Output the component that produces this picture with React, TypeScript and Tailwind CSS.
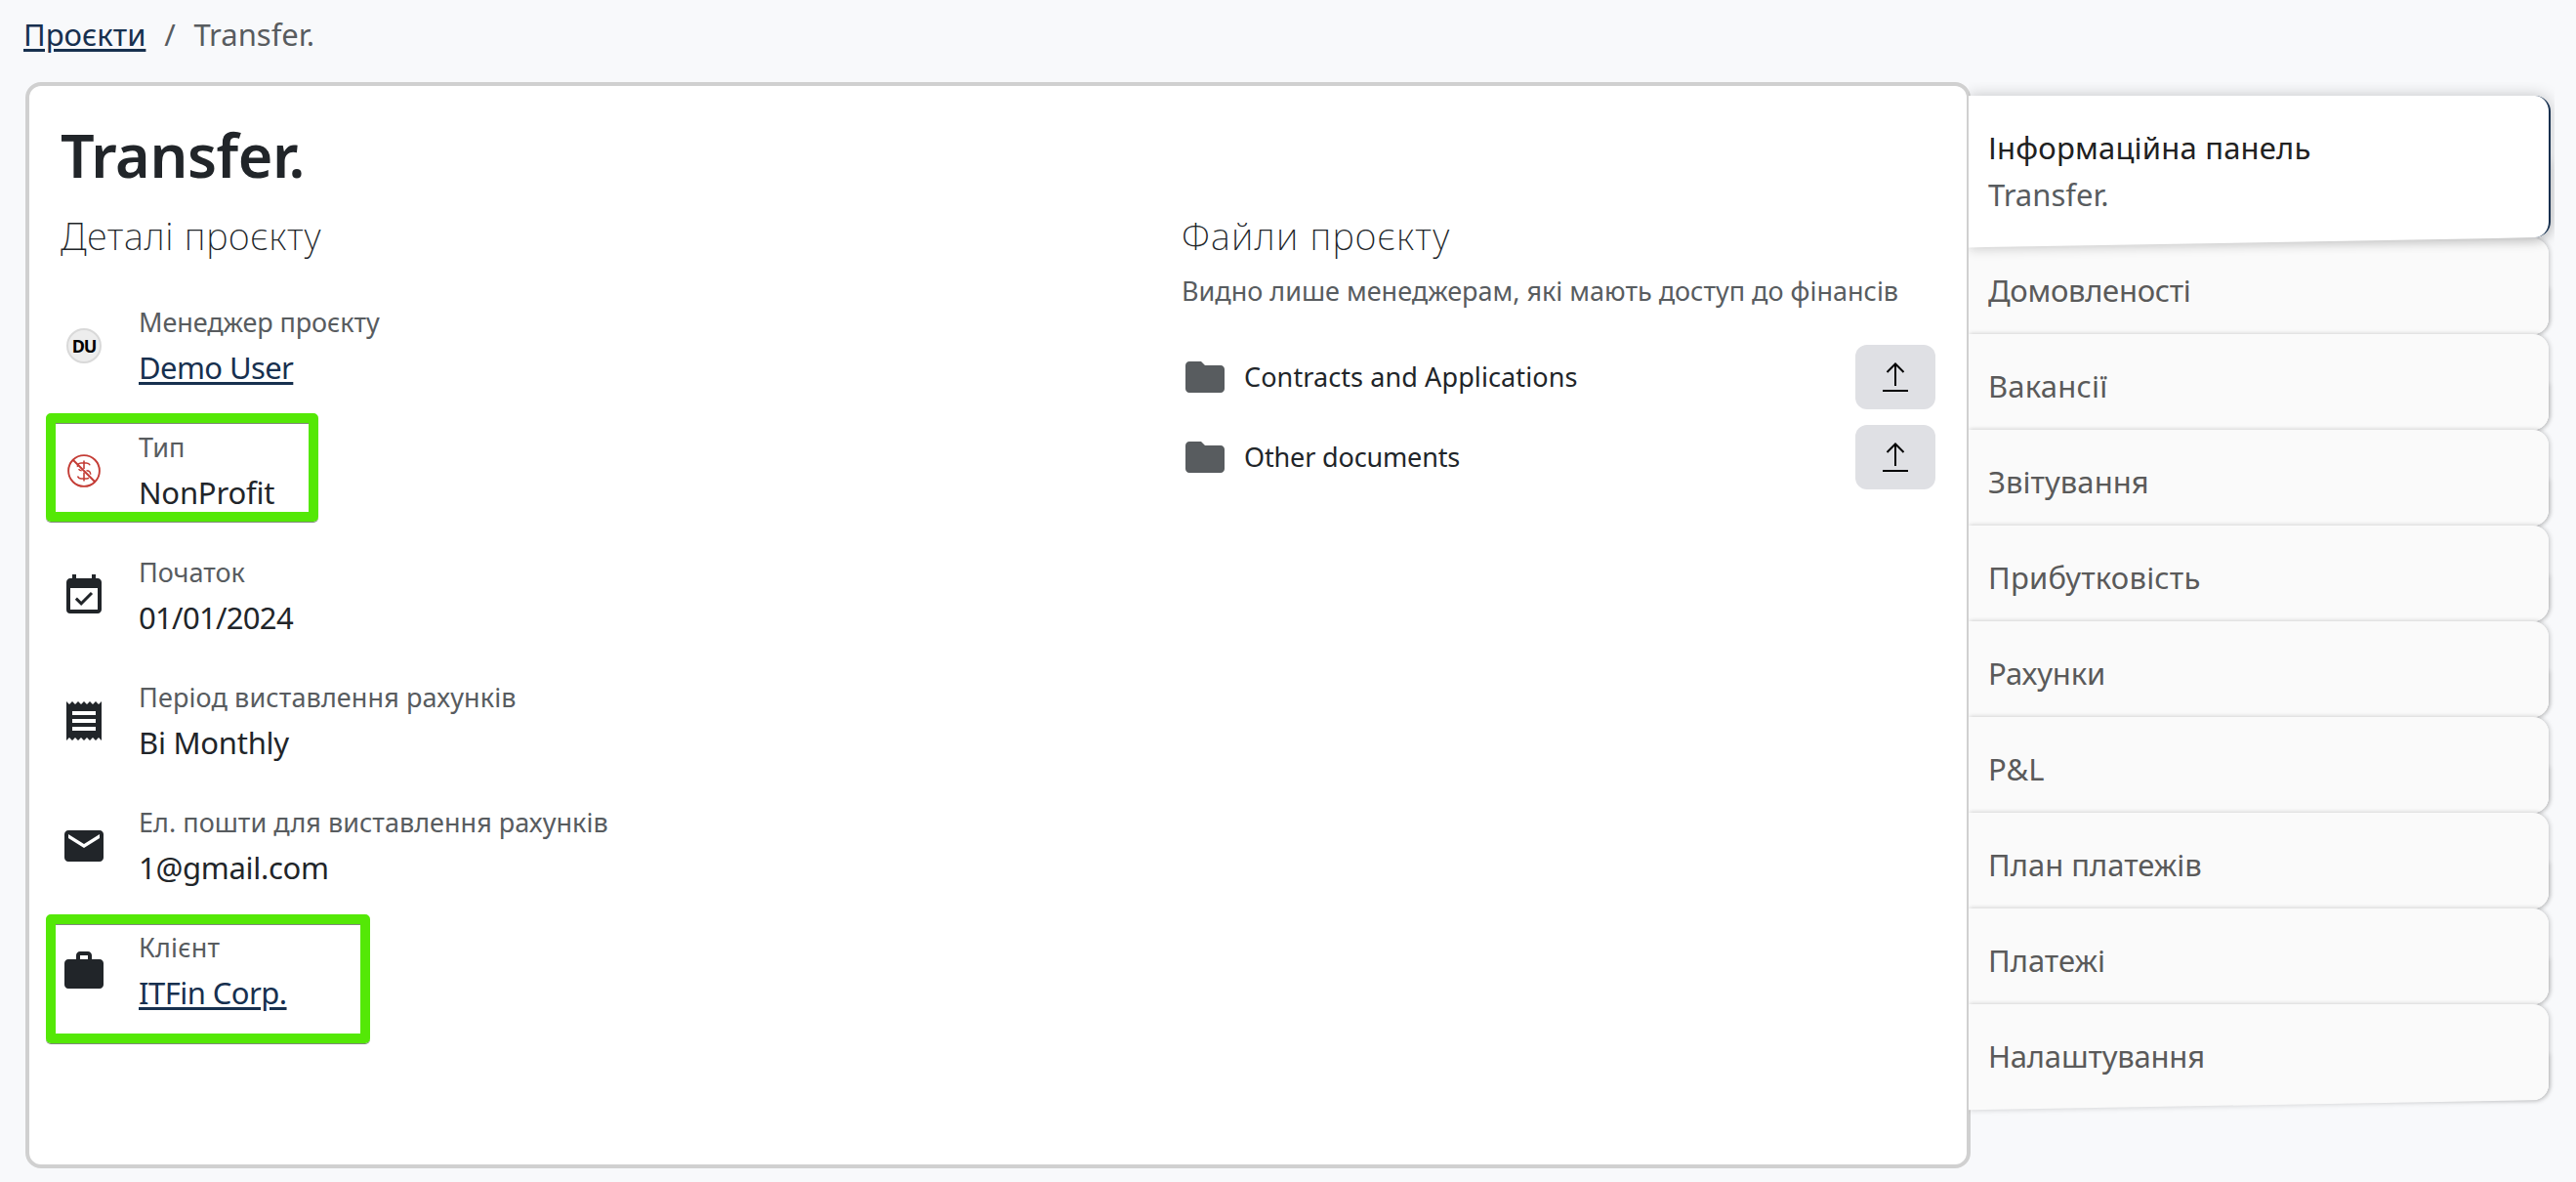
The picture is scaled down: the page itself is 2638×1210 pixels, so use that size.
import React from "react";
import { MdEmail, MdEventAvailable, MdFolder, MdReceipt, MdWork } from "react-icons/md";

const NonProfitIcon = () => (
  <svg viewBox="0 0 48 48" className="size-12" fill="none" stroke="#c43c35" strokeWidth="1.9">
    <circle cx="24" cy="24" r="15.9" />
    <path d="M13 13L35 35" />
    <path d="M24 13.5V22M24 25.5V34.5" strokeWidth="1.6" />
    <path d="M17.5 20c-.5-2 .8-4 3.500-4h5.500c1.800 0 3 .8 3.700 2.300M17.500 29.500c.7 1.700 2 2.500 3.700 2.500h5.500c1 0 1.700-.3 2.300-.8M18.500 22.300c.8 1 2 1.500 3.200 1.500M26.500 23.800c2.500 0 4.200 1.600 4.200 4" strokeWidth="1.5" />
  </svg>
);

const UploadIcon = () => (
  <svg viewBox="0 0 26 30" className="w-[26px] h-[30px]" fill="none" stroke="#000" strokeWidth="2">
    <path d="M13 24V1.500" />
    <path d="M4.500 10L13 1.500L21.500 10" />
    <path d="M0 29H26" />
  </svg>
);

const Avatar = () => (
  <div className="size-9 mx-1.5 rounded-full border-2 border-[#d9d9d9] bg-[#ededed] flex items-center justify-center text-[18px] font-bold text-black tracking-[-1.2px]">
    DU
  </div>
);

const details = [
  { label: "Менеджер проєкту", value: "Demo User", icon: <Avatar />, link: true, labelClass: "tracking-[-0.08px]", valueClass: "tracking-[-0.6px]" },
  { label: "Тип", value: "NonProfit", icon: <NonProfitIcon />, valueClass: "tracking-[-0.2px]", mark: "w-[279px] h-[111px] -top-[15px]" },
  { label: "Початок", value: "01/01/2024", icon: <MdEventAvailable className="size-12" />, valueClass: "tracking-[-0.7px]" },
  { label: "Період виставлення рахунків", value: "Bi Monthly", icon: <MdReceipt className="size-12" />, labelClass: "tracking-[0.12px]", valueClass: "tracking-[-0.25px]" },
  { label: "Ел. пошти для виставлення рахунків", value: "1@gmail.com", icon: <MdEmail className="size-12" />, labelClass: "tracking-[0.03px]", valueClass: "tracking-[-0.3px]" },
  { label: "Клієнт", value: "ITFin Corp.", icon: <MdWork className="size-12" />, link: true, labelClass: "tracking-[0.2px]", valueClass: "tracking-[-0.55px]", mark: "w-[332px] h-[132px] -top-[14px]" },
];

const files = [
  { name: "Contracts and Applications", className: "tracking-[0.1px]" },
  { name: "Other documents", className: "tracking-[-0.15px]" },
];

const tabs = [
  { name: "Домовленості", className: "tracking-[-0.3px]" },
  { name: "Вакансії", className: "tracking-[0.2px]" },
  { name: "Звітування", className: "tracking-[0.05px]" },
  { name: "Прибутковість", className: "tracking-[0.2px]" },
  { name: "Рахунки", className: "tracking-[-0.1px]" },
  { name: "P&L", className: "" },
  { name: "План платежів", className: "" },
  { name: "Платежі", className: "" },
  { name: "Налаштування", className: "tracking-[-0.2px]" },
];

const linkClass = "text-[#17304f] underline decoration-[2.5px] underline-offset-[3px]";

const App = () => {
  return (
    <div className="w-[2638px] h-[1210px] overflow-hidden bg-[#f8f9fb] text-[#212529] font-['Noto_Sans',sans-serif] flex flex-col">
      <nav className="h-[84px] pl-6 pt-[11px] flex items-start text-[31px] leading-[48px]">
        <a href="#" className={linkClass}>Проєкти</a>
        <span className="w-[49px] text-center text-[#585c5f]">/</span>
        <span className="text-[#585c5f]">Transfer.</span>
      </nav>

      <div className="flex items-start pl-[26px]">
        <main className="w-[1992px] h-[1112px] shrink-0 bg-white border-4 border-[#d0d0d0] rounded-2xl pl-8 pr-8 pt-[31px]">
          <h1 className="h-[94px] text-[61px] leading-[80px] font-semibold tracking-[-0.4px]">Transfer.</h1>

          <div className="flex">
            <section className="w-[1148px]">
              <h2 className="text-[38px] leading-[56px] [font-weight:250] tracking-[0.7px]">Деталі проєкту</h2>
              <div className="mt-[41px] flex flex-col gap-9">
                {details.map((item) => (
                  <div key={item.label} className="relative h-[92px] flex items-center">
                    <div className="w-12 -mt-1 shrink-0">{item.icon}</div>
                    <div className="ml-8">
                      <p className={`text-[27px] leading-[40px] text-[#585c5f] ${item.labelClass ?? ""}`}>{item.label}</p>
                      <p className={`text-[31px] leading-[52px] ${item.valueClass ?? ""}`}>
                        {item.link ? <a href="#" className={linkClass}>{item.value}</a> : item.value}
                      </p>
                    </div>
                    {item.mark && (
                      <div className={`absolute -left-[15px] border-10 border-[#54e806] rounded-[5px] shadow-[0_1px_0_#7d8a78,inset_0_1px_0_#7d8a78] ${item.mark}`} />
                    )}
                  </div>
                ))}
              </div>
            </section>

            <section className="w-[772px]">
              <h2 className="text-[38px] leading-[56px] [font-weight:250] tracking-[1.2px]">Файли проєкту</h2>
              <p className="mt-[9px] text-[27px] leading-[40px] text-[#585c5f] whitespace-nowrap">
                Видно лише менеджерам, які мають доступ до фінансів
              </p>
              <div className="mt-[35px] flex flex-col gap-4">
                {files.map((file) => (
                  <div key={file.name} className="h-[66px] flex items-center">
                    <MdFolder className="size-12 text-[#585c5f]" />
                    <span className={`ml-4 text-[27px] ${file.className}`}>{file.name}</span>
                    <button className="ml-auto w-[82px] h-[66px] rounded-xl bg-[#dfe0e4] flex items-center justify-center">
                      <UploadIcon />
                    </button>
                  </div>
                ))}
              </div>
            </section>
          </div>
        </main>

        {/* tabs overlap the right border of the card by 2px */}
        <aside className="relative -ml-0.5 mt-3.5 w-[600px] pr-1 flex flex-col text-[31px] leading-[48px] [clip-path:inset(-14px_0_-20px_0)]">
          <div className="relative z-10 h-[145px] mb-px rounded-r-[16px] shadow-[0_0_16px_rgba(0,0,0,0.22)]">
            <div className="absolute inset-x-0 bottom-0 h-20 bg-white rounded-br-[16px] origin-bottom-right -skew-y-1 shadow-[0_3px_12px_rgba(0,0,0,0.14)]" />
            <div className="relative h-full rounded-r-[16px] bg-white border-r-2 border-[#17304f] pl-5 pt-[29px]">
              <p className="text-[#212121] tracking-[0.2px]">Інформаційна панель</p>
              <p className="text-[#585c5f]">Transfer.</p>
            </div>
          </div>
          {tabs.map((tab) => (
            <div key={tab.name} className="relative mr-0.5 h-[98px] rounded-r-[16px] shadow-[1px_0_5px_rgba(0,0,0,0.22)]">
              <div className="absolute inset-x-0 bottom-0 h-12 bg-[#fafafa] rounded-br-[16px] origin-bottom-right -skew-y-1 shadow-[1px_1px_5px_rgba(0,0,0,0.14)]" />
              <div className="relative h-full rounded-r-[16px] bg-[#fafafa] pl-5 pt-[29px] text-[#5a5a5a]">
                <span className={tab.className}>{tab.name}</span>
              </div>
            </div>
          ))}
        </aside>
      </div>
    </div>
  );
};

export default App;
